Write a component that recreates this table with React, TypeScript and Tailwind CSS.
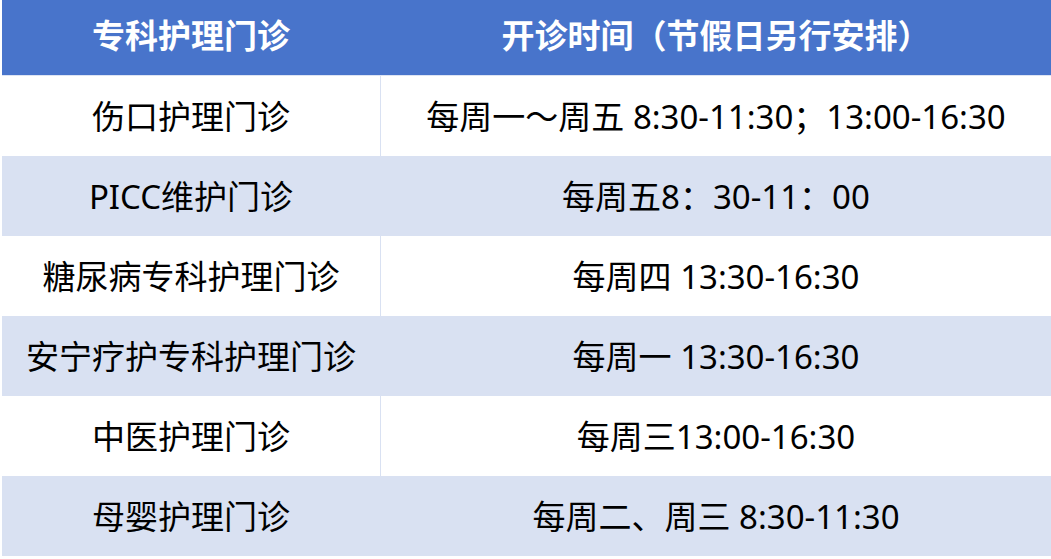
const rows = [
  { name: '伤口护理门诊', time: '每周一～周五 8:30-11:30；13:00-16:30' },
  { name: 'PICC维护门诊', time: '每周五8：30-11：00' },
  { name: '糖尿病专科护理门诊', time: '每周四 13:30-16:30' },
  { name: '安宁疗护专科护理门诊', time: '每周一 13:30-16:30' },
  { name: '中医护理门诊', time: '每周三13:00-16:30' },
  { name: '母婴护理门诊', time: '每周二、周三 8:30-11:30' },
];

export default function App() {
  return (
    <div
      className="h-[559px] w-[1051px] overflow-hidden bg-white pl-[2px] text-black"
      style={{ fontFamily: '"Noto Sans", "Noto Sans CJK SC", sans-serif' }}
    >
      <div className="grid h-[75px] grid-cols-[378px_1fr] bg-[#4874cb] text-[33px] font-bold text-white">
        <div className="flex items-center justify-center pb-[4px]">专科护理门诊</div>
        <div className="flex items-center justify-center pb-[4px] pl-[1px]">开诊时间（节假日另行安排）</div>
      </div>
      <div className="h-px bg-[#dde4f3]" />
      {rows.map((r, i) => (
        <div
          key={r.name}
          className={`grid h-[80px] grid-cols-[378px_1px_1fr] text-[33px] leading-none ${
            i % 2 === 0 ? 'bg-white' : 'bg-[#d9e1f2]'
          }`}
        >
          <div className="flex items-center justify-center">{r.name}</div>
          <div className="bg-[#d9e1f2]" />
          <div className="flex items-center justify-center">{r.time}</div>
        </div>
      ))}
    </div>
  );
}
